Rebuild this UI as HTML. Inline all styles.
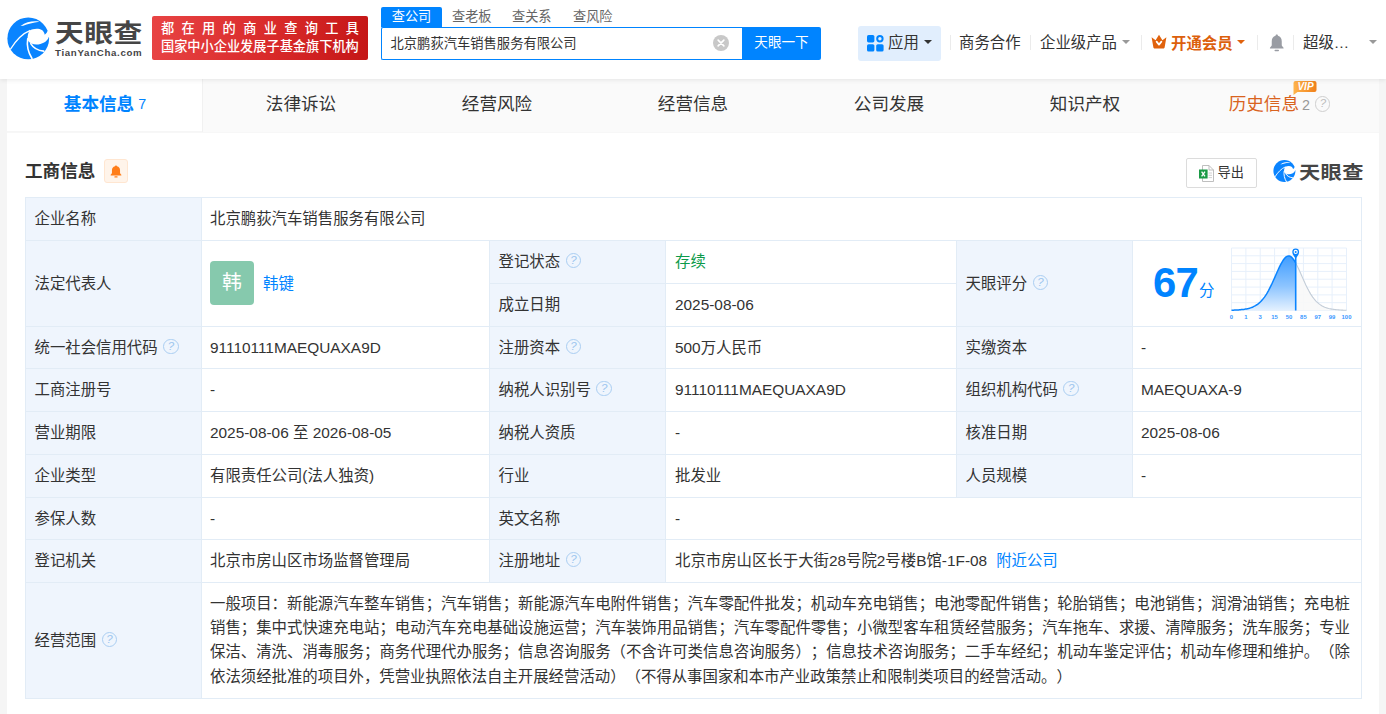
<!DOCTYPE html>
<html lang="zh-CN">
<head>
<meta charset="utf-8">
<title>北京鹏荻汽车销售服务有限公司 - 天眼查</title>
<style>
*{box-sizing:border-box;margin:0;padding:0}
html,body{width:1386px;height:714px;overflow:hidden}
body{position:relative;background:#f5f5f5;color:#333;font-family:"Liberation Sans","Noto Sans CJK SC",sans-serif;font-size:15.4px;-webkit-font-smoothing:antialiased}
.abs,.abs>*{position:absolute}
.a{position:absolute;white-space:nowrap}
/* header */
#hd{position:absolute;left:0;top:0;width:1386px;height:79px;background:#fff;box-shadow:0 1px 5px rgba(0,0,0,.09);z-index:5}
#banner{left:152px;top:16px;width:216px;height:44px;font-weight:500;border-radius:2px;background:linear-gradient(100deg,#e84444 0%,#d92a2a 55%,#c41616 100%);color:#fff;font-size:13.2px}
#banner .l1{left:9px;top:4px;line-height:18px;letter-spacing:7.35px}
#banner .l2{left:9px;top:22px;line-height:18px}
.stab{top:7px;height:20px;line-height:19px;font-size:13.2px;color:#666}
#stab1{left:381px;width:61px;background:#0084ff;color:#fff;text-align:center;border-radius:2px 2px 0 0}
#sbox{left:381px;top:27px;width:362px;height:33px;border:1px solid #0084ff;border-right:0;background:#fff;border-radius:2px 0 0 2px}
#sbox span{left:8.5px;top:0;line-height:31px;font-size:13.3px;color:#333}
#sbtn{left:742px;top:27px;width:79px;height:33px;background:#0084ff;color:#fff;font-size:13.6px;line-height:32px;text-align:center;border-radius:0 2px 2px 0}
.nav{top:32px;line-height:22px;font-size:15.4px;color:#333}
.sep{position:absolute;top:35px;width:1px;height:15px;background:#ebebeb}
.caret{position:absolute;width:0;height:0;border-left:4px solid transparent;border-right:4px solid transparent;border-top:4.5px solid #999}
/* container */
#ct{position:absolute;left:7px;top:79px;width:1372px;height:660px;background:#fff}
#tabs{position:absolute;left:0;top:0;width:1372px;height:54px;background:#fafafa;border-bottom:1px solid #f7f7f7}
.tab{position:absolute;top:0;width:196px;height:53px;line-height:51px;text-align:center;font-size:17.6px;color:#333}
.tab.on{background:#fff;height:52px;border-bottom:1px solid #f6f6f6;box-sizing:content-box;color:#0084ff;font-weight:bold;border-left:0}
.tab small{font-size:14.3px;font-weight:normal;margin-left:4px;position:relative;top:-1.5px}
/* table */
.bg{position:absolute;background:#eff5fd}
.hl{position:absolute;height:1px;background:#e2ecf6}
.vl{position:absolute;width:1px;background:#e2ecf6}
.t{text-spacing-trim:space-all;position:absolute;white-space:nowrap;line-height:44px;height:44px;font-size:15.4px;color:#333}
.q{display:inline-block;width:15.4px;height:15.4px;border:1.2px solid #aacef2;border-radius:50%;vertical-align:-1.2px;margin-left:5.5px;position:relative}
.q:after{content:"?";position:absolute;left:0.4px;top:0;width:13px;line-height:13.4px;text-align:center;font-size:11.5px;color:#9dc6ef;font-family:"Liberation Sans",sans-serif}
.q.g{border-color:#cfcfcf}.q.g:after{color:#bdbdbd}
.blue{color:#0084ff}
#tb{position:absolute;left:-7px;top:-79px;width:1386px;height:714px}
.sc{text-spacing-trim:space-all;position:absolute;left:210px;width:1140px;height:24px;line-height:24px;font-size:15.4px;white-space:nowrap;color:#333}
.sc.j{text-align:justify;text-align-last:justify}
</style>
</head>
<body>
<div id="hd">
<svg class="a" style="left:0;top:10px" width="60" height="56" viewBox="0 0 765 714">
<circle cx="360" cy="362" r="266" fill="#0a84ff"/>
<path d="M375,263 C440,228 555,222 570,314 Q597,300 609,266 L655,266 L655,343 L622,343 C600,420 480,462 400,426 C368,410 350,385 352,365 C350,330 360,292 375,263 Z" fill="#fff"/>
<path d="M380,262 C285,300 195,400 135,497" fill="none" stroke="#fff" stroke-width="17" stroke-linecap="round"/>
<path d="M353,368 C340,450 362,545 408,618" fill="none" stroke="#fff" stroke-width="20" stroke-linecap="round"/>
<path d="M392,428 C430,492 492,518 557,524" fill="none" stroke="#fff" stroke-width="20" stroke-linecap="round"/>
<path d="M262,203 C335,152 420,136 504,149 C420,162 350,180 296,200 Z" fill="#fff"/>
</svg>
<div class="a" id="lgt" style="left:55px;top:16px;font-size:24.6px;line-height:36px;font-weight:700;color:#454545;letter-spacing:0.4px;transform:scaleX(1.17);transform-origin:0 0">天眼查</div>
<div class="a" id="lge" style="left:55px;top:47px;font-size:9.7px;line-height:12px;font-weight:bold;color:#454545;letter-spacing:0.68px">TianYanCha.com</div>
<div class="a abs" id="banner"><span class="a l1">都在用的商业查询工具</span><span class="a l2">国家中小企业发展子基金旗下机构</span></div>
<div class="a stab" id="stab1">查公司</div>
<div class="a stab" style="left:452px">查老板</div>
<div class="a stab" style="left:512px">查关系</div>
<div class="a stab" style="left:573px">查风险</div>
<div class="a abs" id="sbox"><span>北京鹏荻汽车销售服务有限公司</span>
<svg style="left:331px;top:6.5px" width="16" height="16" viewBox="0 0 15 15"><circle cx="7.5" cy="7.5" r="7.5" fill="#c8c8c8"/><path d="M4.8 4.8l5.4 5.4M10.2 4.8l-5.4 5.4" stroke="#fff" stroke-width="1.5" stroke-linecap="round"/></svg></div>
<div class="a" id="sbtn">天眼一下</div>
<div class="a" id="app" style="left:858px;top:26px;width:83px;height:35px;border-radius:3px;background:#e1eefd"></div>
<svg class="a" style="left:867px;top:35px" width="17" height="17" viewBox="0 0 17 17"><rect x="0" y="0" width="7.4" height="7.4" rx="1.6" fill="#0084ff"/><rect x="0" y="9.2" width="7.4" height="7.4" rx="1.6" fill="#0084ff"/><rect x="9.2" y="9.2" width="7.4" height="7.4" rx="1.6" fill="#0084ff"/><circle cx="12.9" cy="3.7" r="2.7" fill="none" stroke="#0084ff" stroke-width="2"/></svg>
<div class="a nav" style="left:888px">应用</div><i class="caret" style="left:924px;top:40px;border-top-color:#333"></i>
<i class="sep" style="left:950px"></i>
<div class="a nav" style="left:959px">商务合作</div>
<i class="sep" style="left:1030px"></i>
<div class="a nav" style="left:1040px">企业级产品</div><i class="caret" style="left:1122px;top:40px"></i>
<i class="sep" style="left:1141px"></i>
<svg class="a" style="left:1151px;top:34px" width="16" height="15" viewBox="0 0 16 15"><path d="M0.6 3.2 L4.6 6.2 L8 0.8 L11.4 6.2 L15.4 3.2 L13.6 13.6 Q13.5 14.4 12.7 14.4 L3.3 14.4 Q2.5 14.4 2.4 13.6 Z" fill="#e0620d"/><path d="M5.6 7.6 L8 10.6 L10.4 7.6" fill="none" stroke="#fff" stroke-width="1.7" stroke-linecap="round" stroke-linejoin="round"/></svg>
<div class="a nav" style="left:1171px;color:#dc600c;font-weight:bold;margin-top:0.5px">开通会员</div><i class="caret" style="left:1237px;top:40px;border-top-color:#e0620d"></i>
<i class="sep" style="left:1257px"></i>
<svg class="a" style="left:1268.5px;top:33.8px" width="15.5" height="18.2" viewBox="0 0 17 20"><path d="M8.5 0.6 C9.3 0.6 9.8 1.2 9.8 2 C12.6 2.6 14 5 14 8 L14 12.2 C14 13.4 15 14 16 15 L16 16 L1 16 L1 15 C2 14 3 13.4 3 12.2 L3 8 C3 5 4.4 2.6 7.2 2 C7.2 1.2 7.7 0.6 8.5 0.6 Z" fill="#999ca3"/><rect x="6" y="17.4" width="5" height="1.6" rx="0.8" fill="#999ca3"/></svg>
<i class="sep" style="left:1293px"></i>
<div class="a nav" style="left:1303px">超级…</div><i class="caret" style="left:1369px;top:40px"></i>
</div>
<div id="ct">
<div id="tabs">
<div class="tab on" style="left:0">基本信息<small>7</small></div>
<div class="tab" style="left:195px;width:197px;border-left:1px solid #f1f1f1">法律诉讼</div>
<div class="tab" style="left:392px">经营风险</div>
<div class="tab" style="left:588px">经营信息</div>
<div class="tab" style="left:784px">公司发展</div>
<div class="tab" style="left:980px">知识产权</div>
<div class="tab" style="left:1176px;color:#d9631e;padding-right:3px">历史信息<span style="font-size:14.3px;color:#999;margin-left:3px">2</span><i class="q g" style="margin-left:5px;vertical-align:-1.6px"></i>
<svg class="a" style="left:110px;top:2px" width="24" height="14" viewBox="0 0 23 14"><defs><linearGradient id="vg" x1="0" y1="0" x2="1" y2="0"><stop offset="0" stop-color="#ffb44d"/><stop offset="1" stop-color="#f0801a"/></linearGradient></defs><path d="M2 0H21Q23 0 23 2V9Q23 11 21 11H4L0 14V2Q0 0 2 0Z" fill="url(#vg)"/><text x="12" y="9.2" font-size="10" font-weight="bold" font-style="italic" fill="#fff" text-anchor="middle" font-family="Liberation Sans,sans-serif">VIP</text></svg>
</div>
</div>
<div class="a" style="left:18px;top:79px;font-size:17.6px;font-weight:bold;line-height:26px;color:#333">工商信息</div>
<div class="a" style="left:97px;top:80px;width:24px;height:24px;border:1px solid #ffe6d1;background:#fff4ea;border-radius:3px"></div>
<svg class="a" style="left:103px;top:85.6px" width="12" height="13" viewBox="0 0 11 13" preserveAspectRatio="none"><path d="M5.5 0.4C6 0.4 6.4 0.8 6.4 1.3C8.3 1.8 9.2 3.4 9.2 5.2V7.8C9.2 8.6 9.8 9.1 10.4 9.7V10.4H0.6V9.7C1.2 9.1 1.8 8.6 1.8 7.8V5.2C1.8 3.4 2.7 1.8 4.6 1.3C4.6 0.8 5 0.4 5.5 0.4Z" fill="#ff7d18"/><rect x="4" y="11.2" width="3" height="1.3" rx="0.6" fill="#ff7d18"/></svg>
<div class="a" style="left:1179px;top:79px;width:71px;height:30px;border:1px solid #dcdcdc;border-radius:2px;background:#fff"></div>
<svg class="a" style="left:1191.5px;top:86px" width="15" height="17" viewBox="0 0 15 17"><path d="M3.5 0.5H10L14.5 5V16.5H3.5Z" fill="#fff" stroke="#b8b8b8" stroke-width="0.9"/><path d="M10 0.5V5H14.5" fill="none" stroke="#b8b8b8" stroke-width="0.9"/><path d="M9.5 8h3.5M9.5 10.3h3.5M9.5 12.6h3.5" stroke="#c4c4c4" stroke-width="0.8"/><rect x="0" y="4.5" width="8.6" height="9" fill="#1b9a46"/><path d="M2.6 6.6l3.4 4.8M6 6.6l-3.4 4.8" stroke="#fff" stroke-width="1.3"/></svg>
<div class="a" style="left:1210.5px;top:83.5px;font-size:13.2px;line-height:20px;color:#333">导出</div>
<svg class="a" style="left:1265.4px;top:80.1px" width="24.8" height="24.8" viewBox="60 70 600 600">
<circle cx="360" cy="362" r="266" fill="#0a84ff"/>
<path d="M375,263 C440,228 555,222 570,314 Q597,300 609,266 L655,266 L655,343 L622,343 C600,420 480,462 400,426 C368,410 350,385 352,365 C350,330 360,292 375,263 Z" fill="#fff"/>
<path d="M380,262 C285,300 195,400 135,497" fill="none" stroke="#fff" stroke-width="22" stroke-linecap="round"/>
<path d="M353,368 C340,450 362,545 408,618" fill="none" stroke="#fff" stroke-width="24" stroke-linecap="round"/>
<path d="M392,428 C430,492 492,518 557,524" fill="none" stroke="#fff" stroke-width="24" stroke-linecap="round"/>
<path d="M262,203 C335,152 420,136 504,149 C420,162 350,180 296,200 Z" fill="#fff"/>
</svg>
<div class="a" style="left:1292px;top:78.5px;font-size:18.4px;line-height:30px;font-weight:700;color:#454545;letter-spacing:0.3px;transform:scaleX(1.155);transform-origin:0 0">天眼查</div>
<div id="tb">
<div class="bg" style="left:25px;top:197px;width:176px;height:501px"></div>
<div class="bg" style="left:489px;top:240px;width:176px;height:342px"></div>
<div class="bg" style="left:956px;top:240px;width:176px;height:257px"></div>
<i class="hl" style="left:25px;top:197px;width:1337px"></i>
<i class="hl" style="left:25px;top:240px;width:1337px"></i>
<i class="hl" style="left:25px;top:326px;width:1337px"></i>
<i class="hl" style="left:25px;top:368px;width:1337px"></i>
<i class="hl" style="left:25px;top:411px;width:1337px"></i>
<i class="hl" style="left:25px;top:454px;width:1337px"></i>
<i class="hl" style="left:25px;top:497px;width:1337px"></i>
<i class="hl" style="left:25px;top:539px;width:1337px"></i>
<i class="hl" style="left:25px;top:582px;width:1337px"></i>
<i class="hl" style="left:25px;top:698px;width:1337px"></i>
<i class="hl" style="left:489px;top:283px;width:467px"></i>
<i class="vl" style="left:25px;top:197px;height:502px"></i>
<i class="vl" style="left:201px;top:197px;height:502px"></i>
<i class="vl" style="left:1361px;top:197px;height:502px"></i>
<i class="vl" style="left:489px;top:240px;height:342px"></i>
<i class="vl" style="left:665px;top:240px;height:342px"></i>
<i class="vl" style="left:956px;top:240px;height:257px"></i>
<i class="vl" style="left:1132px;top:240px;height:257px"></i>
<div class="t" style="left:34.5px;top:197px">企业名称</div>
<div class="t" style="left:210px;top:197px">北京鹏荻汽车销售服务有限公司</div>
<div class="t" style="left:34.5px;top:240px;height:87px;line-height:87px">法定代表人</div>
<div class="t blue" style="left:263px;top:240px;height:87px;line-height:87px">韩键</div>
<div class="t" style="left:965.5px;top:240px;height:87px;line-height:87px">天眼评分<i class="q"></i></div>
<div class="a" style="left:210px;top:261px;width:44px;height:44px;border-radius:4px;background:#86c9ad;color:#fff;font-size:19.8px;line-height:43px;text-align:center">韩</div>
<div class="t" style="left:498.5px;top:240px">登记状态<i class="q"></i></div>
<div class="t" style="left:675px;top:240px"><span style="color:#0c9a49">存续</span></div>
<div class="t" style="left:498.5px;top:283px">成立日期</div>
<div class="t" style="left:675px;top:283px">2025-08-06</div>
<div class="a" style="left:1153px;top:257px;font-size:41.8px;line-height:52px;font-weight:bold;color:#0084ff;letter-spacing:-0.8px">67</div>
<div class="a" style="left:1199px;top:279px;font-size:15.4px;line-height:24px;color:#0084ff">分</div>
<svg class="a" style="left:1225px;top:242px" width="132" height="82" viewBox="1225 242 132 82">
<defs><linearGradient id="cg" x1="0" y1="0" x2="0" y2="1"><stop offset="0" stop-color="#3f9dff"/><stop offset="0.55" stop-color="#8cc4ff"/><stop offset="1" stop-color="#e4f1ff"/></linearGradient></defs>
<path d="M1231.5,248.0V310.5M1245.9,248.0V310.5M1260.2,248.0V310.5M1274.6,248.0V310.5M1289.0,248.0V310.5M1303.4,248.0V310.5M1317.8,248.0V310.5M1332.1,248.0V310.5M1346.5,248.0V310.5M1231.5,248.0H1346.5M1231.5,255.8H1346.5M1231.5,263.6H1346.5M1231.5,271.4H1346.5M1231.5,279.2H1346.5M1231.5,287.1H1346.5M1231.5,294.9H1346.5M1231.5,302.7H1346.5M1231.5,310.5H1346.5" fill="none" stroke="#e7f0fb" stroke-width="1"/>
<polygon points="1295.7,263.0 1296.7,264.9 1297.7,266.9 1298.7,269.0 1299.7,271.3 1300.7,273.5 1301.7,275.8 1302.7,278.1 1303.7,280.3 1304.7,282.5 1305.7,284.7 1306.7,286.7 1307.7,288.7 1308.7,290.6 1309.7,292.4 1310.7,294.1 1311.7,295.6 1312.7,297.1 1313.7,298.4 1314.7,299.6 1315.7,300.8 1316.7,301.8 1317.7,302.7 1318.7,303.6 1319.7,304.4 1320.7,305.0 1321.7,305.7 1322.7,306.2 1323.7,306.7 1324.7,307.2 1325.7,307.5 1326.7,307.9 1327.7,308.2 1328.7,308.5 1329.7,308.7 1330.7,308.9 1331.7,309.1 1332.7,309.3 1333.7,309.4 1334.7,309.5 1335.7,309.6 1336.7,309.7 1337.7,309.8 1338.7,309.9 1339.7,310.0 1340.7,310.0 1341.7,310.1 1342.7,310.1 1343.7,310.2 1344.7,310.2 1345.7,310.2 1346.5,310.3 1346.5,310.5 1295.7,310.5" fill="#f8f8f8" fill-opacity="0.9"/>
<polygon points="1231.5,310.2 1232.5,310.2 1233.5,310.2 1234.5,310.1 1235.5,310.1 1236.5,310.0 1237.5,310.0 1238.5,309.9 1239.5,309.8 1240.5,309.7 1241.5,309.6 1242.5,309.5 1243.5,309.4 1244.5,309.3 1245.5,309.1 1246.5,308.9 1247.5,308.7 1248.5,308.5 1249.5,308.2 1250.5,307.9 1251.5,307.5 1252.5,307.2 1253.5,306.7 1254.5,306.2 1255.5,305.7 1256.5,305.0 1257.5,304.4 1258.5,303.6 1259.5,302.7 1260.5,301.8 1261.5,300.8 1262.5,299.6 1263.5,298.4 1264.5,297.1 1265.5,295.6 1266.5,294.1 1267.5,292.4 1268.5,290.6 1269.5,288.7 1270.5,286.7 1271.5,284.7 1272.5,282.5 1273.5,280.3 1274.5,278.1 1275.5,275.8 1276.5,273.5 1277.5,271.3 1278.5,269.0 1279.5,266.9 1280.5,264.9 1281.5,263.0 1282.5,261.3 1283.5,259.8 1284.5,258.5 1285.5,257.4 1286.5,256.7 1287.5,256.2 1288.5,256.0 1289.5,256.1 1290.5,256.5 1291.5,257.2 1292.5,258.2 1293.5,259.5 1294.5,260.9 1295.5,262.6 1295.7,263.0 1295.7,310.5 1231.5,310.5" fill="url(#cg)"/>
<polyline points="1295.7,263.0 1296.7,264.9 1297.7,266.9 1298.7,269.0 1299.7,271.3 1300.7,273.5 1301.7,275.8 1302.7,278.1 1303.7,280.3 1304.7,282.5 1305.7,284.7 1306.7,286.7 1307.7,288.7 1308.7,290.6 1309.7,292.4 1310.7,294.1 1311.7,295.6 1312.7,297.1 1313.7,298.4 1314.7,299.6 1315.7,300.8 1316.7,301.8 1317.7,302.7 1318.7,303.6 1319.7,304.4 1320.7,305.0 1321.7,305.7 1322.7,306.2 1323.7,306.7 1324.7,307.2 1325.7,307.5 1326.7,307.9 1327.7,308.2 1328.7,308.5 1329.7,308.7 1330.7,308.9 1331.7,309.1 1332.7,309.3 1333.7,309.4 1334.7,309.5 1335.7,309.6 1336.7,309.7 1337.7,309.8 1338.7,309.9 1339.7,310.0 1340.7,310.0 1341.7,310.1 1342.7,310.1 1343.7,310.2 1344.7,310.2 1345.7,310.2 1346.5,310.3" fill="none" stroke="#c3cdd8" stroke-width="1.1"/>
<polyline points="1231.5,310.2 1232.5,310.2 1233.5,310.2 1234.5,310.1 1235.5,310.1 1236.5,310.0 1237.5,310.0 1238.5,309.9 1239.5,309.8 1240.5,309.7 1241.5,309.6 1242.5,309.5 1243.5,309.4 1244.5,309.3 1245.5,309.1 1246.5,308.9 1247.5,308.7 1248.5,308.5 1249.5,308.2 1250.5,307.9 1251.5,307.5 1252.5,307.2 1253.5,306.7 1254.5,306.2 1255.5,305.7 1256.5,305.0 1257.5,304.4 1258.5,303.6 1259.5,302.7 1260.5,301.8 1261.5,300.8 1262.5,299.6 1263.5,298.4 1264.5,297.1 1265.5,295.6 1266.5,294.1 1267.5,292.4 1268.5,290.6 1269.5,288.7 1270.5,286.7 1271.5,284.7 1272.5,282.5 1273.5,280.3 1274.5,278.1 1275.5,275.8 1276.5,273.5 1277.5,271.3 1278.5,269.0 1279.5,266.9 1280.5,264.9 1281.5,263.0 1282.5,261.3 1283.5,259.8 1284.5,258.5 1285.5,257.4 1286.5,256.7 1287.5,256.2 1288.5,256.0 1289.5,256.1 1290.5,256.5 1291.5,257.2 1292.5,258.2 1293.5,259.5 1294.5,260.9 1295.5,262.6 1295.7,263.0" fill="none" stroke="#0a84ff" stroke-width="1.5"/>
<path d="M1295.7,256.5V310.5" stroke="#0a84ff" stroke-width="1.6"/>
<path d="M1295.7,258.6 C1294.5,256.6 1292.3,254.6 1292.3,251.9 A3.4,3.4 0 1 1 1299.1000000000001,251.9 C1299.1000000000001,254.6 1296.9,256.6 1295.7,258.6Z" fill="#0a84ff"/>
<circle cx="1295.7" cy="251.9" r="2.1" fill="#fff"/><circle cx="1295.7" cy="251.9" r="1" fill="#0a84ff"/>
<g font-family="Liberation Sans,sans-serif" font-size="5.9" font-weight="bold" fill="#3a98ff" text-anchor="middle"><text x="1231.5" y="318.6">0</text><text x="1245.9" y="318.6">1</text><text x="1260.2" y="318.6">3</text><text x="1274.6" y="318.6">15</text><text x="1289.0" y="318.6">50</text><text x="1303.4" y="318.6">85</text><text x="1317.8" y="318.6">97</text><text x="1332.1" y="318.6">99</text><text x="1346.5" y="318.6">100</text></g>
</svg>
<div class="t" style="left:34.5px;top:326px;height:43px;line-height:43px">统一社会信用代码<i class="q"></i></div>
<div class="t" style="left:210px;top:326px;height:43px;line-height:43px">91110111MAEQUAXA9D</div>
<div class="t" style="left:498.5px;top:326px;height:43px;line-height:43px">注册资本<i class="q"></i></div>
<div class="t" style="left:675px;top:326px;height:43px;line-height:43px">500万人民币</div>
<div class="t" style="left:965.5px;top:326px;height:43px;line-height:43px">实缴资本</div>
<div class="t" style="left:1141px;top:326px;height:43px;line-height:43px">-</div>
<div class="t" style="left:34.5px;top:368px">工商注册号</div>
<div class="t" style="left:210px;top:368px">-</div>
<div class="t" style="left:498.5px;top:368px">纳税人识别号<i class="q"></i></div>
<div class="t" style="left:675px;top:368px">91110111MAEQUAXA9D</div>
<div class="t" style="left:965.5px;top:368px">组织机构代码<i class="q"></i></div>
<div class="t" style="left:1141px;top:368px">MAEQUAXA-9</div>
<div class="t" style="left:34.5px;top:411px">营业期限</div>
<div class="t" style="left:210px;top:411px">2025-08-06 至 2026-08-05</div>
<div class="t" style="left:498.5px;top:411px">纳税人资质</div>
<div class="t" style="left:675px;top:411px">-</div>
<div class="t" style="left:965.5px;top:411px">核准日期</div>
<div class="t" style="left:1141px;top:411px">2025-08-06</div>
<div class="t" style="left:34.5px;top:454px">企业类型</div>
<div class="t" style="left:210px;top:454px">有限责任公司(法人独资)</div>
<div class="t" style="left:498.5px;top:454px">行业</div>
<div class="t" style="left:675px;top:454px">批发业</div>
<div class="t" style="left:965.5px;top:454px">人员规模</div>
<div class="t" style="left:1141px;top:454px">-</div>
<div class="t" style="left:34.5px;top:497px;height:43px;line-height:43px">参保人数</div>
<div class="t" style="left:210px;top:497px;height:43px;line-height:43px">-</div>
<div class="t" style="left:498.5px;top:497px;height:43px;line-height:43px">英文名称</div>
<div class="t" style="left:675px;top:497px;height:43px;line-height:43px">-</div>
<div class="t" style="left:34.5px;top:539px">登记机关</div>
<div class="t" style="left:210px;top:539px">北京市房山区市场监督管理局</div>
<div class="t" style="left:498.5px;top:539px">注册地址<i class="q"></i></div>
<div class="t" style="left:675px;top:539px">北京市房山区长于大街28号院2号楼B馆-1F-08<span class="blue" style="margin-left:9px">附近公司</span></div>
<div class="t" style="left:34.5px;top:582px;height:117px;line-height:117px">经营范围<i class="q"></i></div>
<div class="sc j" style="top:592.0px">一般项目：新能源汽车整车销售；汽车销售；新能源汽车电附件销售；汽车零配件批发；机动车充电销售；电池零配件销售；轮胎销售；电池销售；润滑油销售；充电桩</div>
<div class="sc j" style="top:616.2px">销售；集中式快速充电站；电动汽车充电基础设施运营；汽车装饰用品销售；汽车零配件零售；小微型客车租赁经营服务；汽车拖车、求援、清障服务；洗车服务；专业</div>
<div class="sc j" style="top:640.4px">保洁、清洗、消毒服务；商务代理代办服务；信息咨询服务（不含许可类信息咨询服务）；信息技术咨询服务；二手车经纪；机动车鉴定评估；机动车修理和维护。（除</div>
<div class="sc" style="top:664.6px">依法须经批准的项目外，凭营业执照依法自主开展经营活动）（不得从事国家和本市产业政策禁止和限制类项目的经营活动。）</div>
</div><!--/TB-->
</div>
</body>
</html>
